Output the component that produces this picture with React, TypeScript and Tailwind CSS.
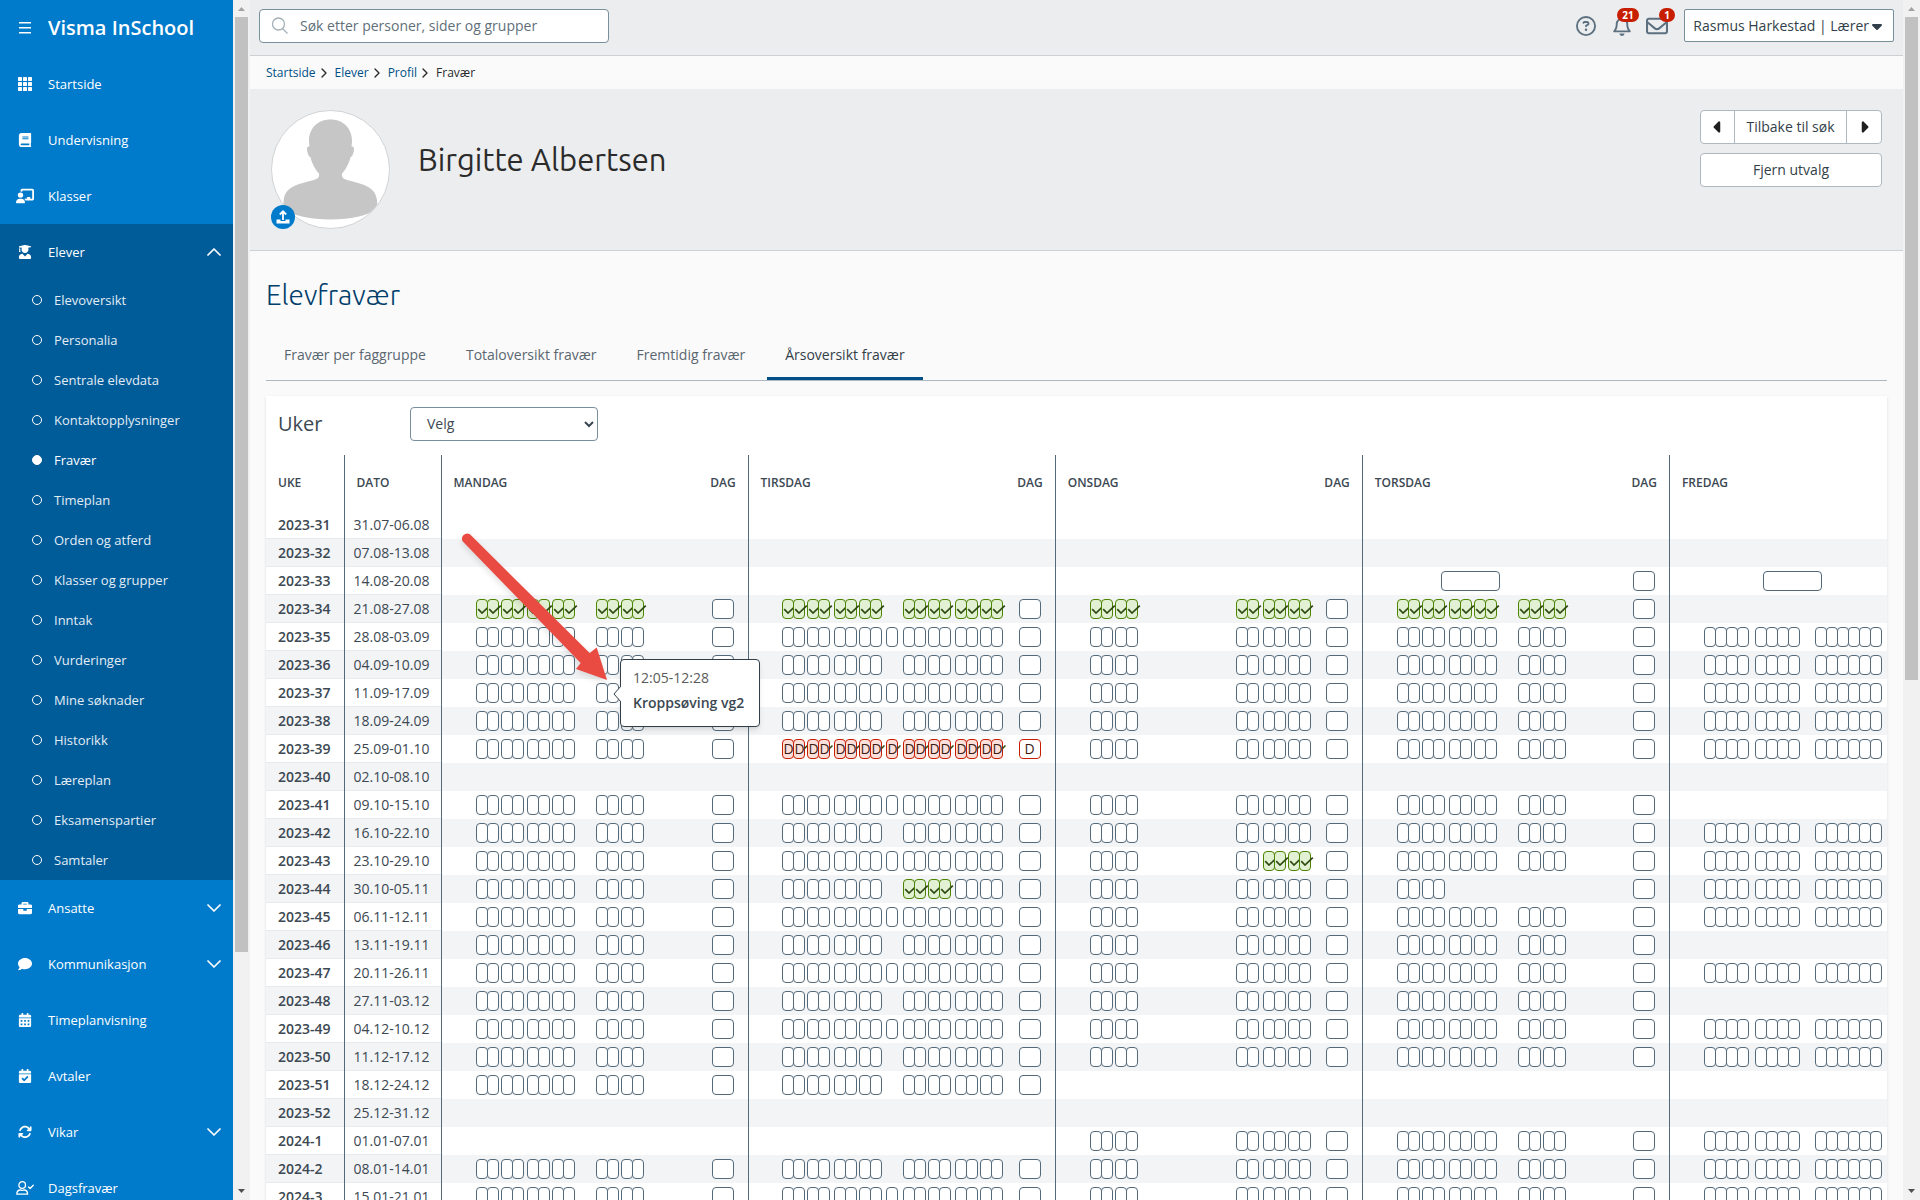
import { ReactNode } from "react";
import { FaBook, FaBriefcase, FaComment, FaCalendarAlt, FaCalendarCheck, FaUserGraduate } from "react-icons/fa";
import { FaChalkboardUser, FaArrowsRotate, FaRegCircleQuestion, FaRegBell, FaRegEnvelope, FaCaretDown, FaCaretLeft, FaCaretRight } from "react-icons/fa6";
import { ChevronDown, ChevronRight, ChevronUp } from "lucide-react";

type Status = "empty" | "present" | "absent";

interface Block {
  at: number; // start offset inside the day column
  groups: number[]; // lessons per tight group
  status?: Status;
  wide?: boolean;
}

interface Day {
  blocks: Block[];
  dag?: Status;
}

const mon = (status: Status = "empty"): Day => ({
  blocks: [
    { at: 34, groups: [2, 2], status },
    { at: 85, groups: [2, 2], status },
    { at: 154, groups: [2, 2], status },
  ],
  dag: "empty",
});

const tue = (odd: boolean, status: Status = "empty", dag: Status = "empty", third: Status = status): Day => ({
  blocks: [
    { at: 33, groups: [2, 2], status },
    { at: 85, groups: [2, 2], status },
    ...(odd ? [{ at: 137, groups: [1], status }] : []),
    { at: 154, groups: [2, 2], status: third },
    { at: 206, groups: [2, 2], status },
  ],
  dag,
});

const wed = (status: Status = "empty", last: Status = status): Day => ({
  blocks: [
    { at: 34, groups: [2, 2], status },
    { at: 180, groups: [2], status },
    { at: 207, groups: [2, 2], status: last },
  ],
  dag: "empty",
});

const thu = (status: Status = "empty"): Day => ({
  blocks: [
    { at: 34, groups: [2, 2], status },
    { at: 86, groups: [2, 2], status },
    { at: 155, groups: [2, 2], status },
  ],
  dag: "empty",
});

const fri = (): Day => ({
  blocks: [
    { at: 34, groups: [4] },
    { at: 85, groups: [4] },
    { at: 145, groups: [6] },
  ],
  dag: "empty",
});

const off: Day = { blocks: [] };

const weeks: { week: string; dates: string; days: Day[] }[] = [
  { week: "2023-31", dates: "31.07-06.08", days: [off, off, off, off, off] },
  { week: "2023-32", dates: "07.08-13.08", days: [off, off, off, off, off] },
  {
    week: "2023-33",
    dates: "14.08-20.08",
    days: [
      off,
      off,
      off,
      { blocks: [{ at: 78, groups: [1], wide: true }], dag: "empty" },
      { blocks: [{ at: 93, groups: [1], wide: true }], dag: "empty" },
    ],
  },
  { week: "2023-34", dates: "21.08-27.08", days: [mon("present"), tue(false, "present"), wed("present"), thu("present"), off] },
  { week: "2023-35", dates: "28.08-03.09", days: [mon(), tue(true), wed(), thu(), fri()] },
  { week: "2023-36", dates: "04.09-10.09", days: [mon(), tue(false), wed(), thu(), fri()] },
  { week: "2023-37", dates: "11.09-17.09", days: [mon(), tue(true), wed(), thu(), fri()] },
  { week: "2023-38", dates: "18.09-24.09", days: [mon(), tue(false), wed(), thu(), fri()] },
  { week: "2023-39", dates: "25.09-01.10", days: [mon(), tue(true, "absent", "absent"), wed(), thu(), fri()] },
  { week: "2023-40", dates: "02.10-08.10", days: [off, off, off, off, off] },
  { week: "2023-41", dates: "09.10-15.10", days: [mon(), tue(true), wed(), thu(), off] },
  { week: "2023-42", dates: "16.10-22.10", days: [mon(), tue(false), wed(), thu(), fri()] },
  { week: "2023-43", dates: "23.10-29.10", days: [mon(), tue(true), wed("empty", "present"), thu(), fri()] },
  {
    week: "2023-44",
    dates: "30.10-05.11",
    days: [mon(), tue(false, "empty", "empty", "present"), wed(), { blocks: [{ at: 34, groups: [2, 2] }], dag: "empty" }, fri()],
  },
  { week: "2023-45", dates: "06.11-12.11", days: [mon(), tue(true), wed(), thu(), fri()] },
  { week: "2023-46", dates: "13.11-19.11", days: [mon(), tue(false), wed(), thu(), off] },
  { week: "2023-47", dates: "20.11-26.11", days: [mon(), tue(true), wed(), thu(), fri()] },
  { week: "2023-48", dates: "27.11-03.12", days: [mon(), tue(false), wed(), thu(), off] },
  { week: "2023-49", dates: "04.12-10.12", days: [mon(), tue(true), wed(), thu(), fri()] },
  { week: "2023-50", dates: "11.12-17.12", days: [mon(), tue(false), wed(), thu(), fri()] },
  { week: "2023-51", dates: "18.12-24.12", days: [mon(), tue(false), off, off, off] },
  { week: "2023-52", dates: "25.12-31.12", days: [off, off, off, off, off] },
  { week: "2024-1", dates: "01.01-07.01", days: [off, off, wed(), thu(), fri()] },
  { week: "2024-2", dates: "08.01-14.01", days: [mon(), tue(false), wed(), thu(), fri()] },
  { week: "2024-3", dates: "15.01-21.01", days: [mon(), tue(true), wed(), thu(), fri()] },
];

const dayNames = ["Mandag", "Tirsdag", "Onsdag", "Torsdag", "Fredag"];

const subItems = [
  "Elevoversikt",
  "Personalia",
  "Sentrale elevdata",
  "Kontaktopplysninger",
  "Fravær",
  "Timeplan",
  "Orden og atferd",
  "Klasser og grupper",
  "Inntak",
  "Vurderinger",
  "Mine søknader",
  "Historikk",
  "Læreplan",
  "Eksamenspartier",
  "Samtaler",
];

const tabs = ["Fravær per faggruppe", "Totaloversikt fravær", "Fremtidig fravær", "Årsoversikt fravær"];

const boxColors: Record<Status, string> = {
  empty: "border-[#546a7b] bg-white",
  present: "border-[#4c8400] bg-[#e2f0d3]",
  absent: "border-[#c81e00] bg-[#fbdfda]",
};

function MenuIcon() {
  return (
    <svg viewBox="0 0 14 14" className="size-[14px]" stroke="currentColor" strokeWidth="1.4">
      <path d="M1 1.800h12M1 6.800h12M1 11.800h12" />
    </svg>
  );
}

function SearchIcon() {
  return (
    <svg viewBox="0 0 18 18" className="size-[18px] shrink-0 text-[#a3b0b8]" fill="none" stroke="currentColor" strokeWidth="1.3">
      <circle cx="7.500" cy="7" r="6" />
      <path d="M11.500 11.500 16.500 16.500" />
    </svg>
  );
}

function GridIcon() {
  return (
    <svg viewBox="0 0 14 14" className="size-[14px]" fill="currentColor">
      {[0, 5, 10].map((y) => [0, 5, 10].map((x) => <rect key={`${x}-${y}`} x={x} y={y} width="4" height="4" rx="0.4" />))}
    </svg>
  );
}

function UserCheckIcon() {
  return (
    <svg viewBox="0 0 18 14" className="w-[18px] h-[14px]" fill="none" stroke="currentColor" strokeWidth="1.3" strokeLinecap="round" strokeLinejoin="round">
      <circle cx="6.2" cy="4" r="3.3" />
      <path d="M.8 13.2c0-2.700 1.600-4.200 3.600-4.200.7 0 1 .4 1.800.4s1.100-.4 1.800-.4c2 0 3.600 1.500 3.600 4.200zM12.600 6l1.500 1.500L17.300 4.300" />
    </svg>
  );
}

function CheckMark() {
  return (
    <svg viewBox="0 0 14 10" className="w-[14px] h-[10px] shrink-0" fill="none" stroke="#2e4a12" strokeWidth="1.7">
      <path d="M1.200 5.200 5 9 12.800 1.600" />
    </svg>
  );
}

function Lesson({ status, wide }: { status: Status; wide?: boolean }) {
  return (
    <button
      aria-label="Time"
      className={`relative h-5 shrink-0 flex items-center border rounded-[4px] text-sm leading-5 font-medium text-[#3c1a14] ${wide ? "w-[59px]" : "w-3 not-first:-ml-px"} ${boxColors[status]}`}
    >
      {status === "present" && <CheckMark />}
      {status === "absent" && (
        <>
          <span className="pl-px">D</span>
          <svg viewBox="0 0 4 4" className="absolute left-[10px] top-[5px] size-1" stroke="#2e4a12" strokeWidth="1.5">
            <path d="M.5 3.500 3.500.5" />
          </svg>
        </>
      )}
    </button>
  );
}

function DayCell({ day }: { day: Day }) {
  let cursor = 0;
  return (
    <div className="flex items-center h-7 pr-[14px]">
      {day.blocks.map((block) => {
        const marginLeft = block.at - cursor;
        const width = block.wide ? 59 : block.groups.reduce((sum, n) => sum + n * 11 + 1, 0) + (block.groups.length - 1) * 2;
        cursor = block.at + width;
        return (
          <div key={block.at} className="flex gap-[2px]" style={{ marginLeft }}>
            {block.groups.map((count, g) => (
              <div key={g} className="flex">
                {Array.from({ length: count }, (_, i) => (
                  <Lesson key={i} status={block.status ?? "empty"} wide={block.wide} />
                ))}
              </div>
            ))}
          </div>
        );
      })}
      {day.dag && (
        <button
          aria-label="Dag"
          className={`ml-auto w-[22px] h-5 shrink-0 border rounded-[4px] bg-white text-sm leading-4 font-medium text-[#3c1a14] ${day.dag === "absent" ? "border-[#c81e00]" : "border-[#546a7b]"}`}
        >
          {day.dag === "absent" ? "D" : null}
        </button>
      )}
    </div>
  );
}

function NavItem({ icon, label, chevron }: { icon: ReactNode; label: string; chevron?: "up" | "down" }) {
  return (
    <a href="#" className="flex items-center h-14 pl-4 pr-[7px] text-[13px] leading-5 font-medium text-white">
      <span className="w-[18px] mr-[14px] flex justify-center text-[14px]">{icon}</span>
      <span className="grow">{label}</span>
      {chevron === "up" && <ChevronUp size={24} strokeWidth={1.75} />}
      {chevron === "down" && <ChevronDown size={24} strokeWidth={1.75} />}
    </a>
  );
}

function Sidebar() {
  return (
    <nav className="w-[233px] shrink-0 bg-[#007aca] overflow-hidden">
      <div className="flex items-center h-14 pl-[18px] text-white">
        <button aria-label="Meny">
          <MenuIcon />
        </button>
        <span className="ml-4 text-xl font-semibold">Visma InSchool</span>
      </div>
      <NavItem icon={<GridIcon />} label="Startside" />
      <NavItem icon={<FaBook />} label="Undervisning" />
      <NavItem icon={<FaChalkboardUser size={18} />} label="Klasser" />
      <div className="bg-[#005b99]">
        <NavItem icon={<FaUserGraduate />} label="Elever" chevron="up" />
        <ul>
          {subItems.map((item) => (
            <li key={item}>
              <a href="#" className={`flex items-center h-10 pl-8 text-[13px] leading-5 ${item === "Fravær" ? "text-white font-medium" : "text-[#e3edf5]"}`}>
                <span className={`size-[10px] mr-3 rounded-full border border-white ${item === "Fravær" ? "bg-white" : ""}`} />
                {item}
              </a>
            </li>
          ))}
        </ul>
      </div>
      <NavItem icon={<FaBriefcase />} label="Ansatte" chevron="down" />
      <NavItem icon={<FaComment />} label="Kommunikasjon" chevron="down" />
      <NavItem icon={<FaCalendarAlt />} label="Timeplanvisning" />
      <NavItem icon={<FaCalendarCheck />} label="Avtaler" />
      <NavItem icon={<FaArrowsRotate />} label="Vikar" chevron="down" />
      <NavItem icon={<UserCheckIcon />} label="Dagsfravær" />
    </nav>
  );
}

function ScrollBar({ thumb }: { thumb: string }) {
  return (
    <div className="w-[17px] shrink-0 flex flex-col items-center bg-[#f1f1f1]">
      <svg viewBox="0 0 17 17" className="size-[17px] shrink-0">
        <path d="M5 11h7L8.500 7z" fill="#a3a3a3" />
      </svg>
      <div className={`w-[13px] bg-[#c1c1c1] ${thumb}`} />
      <svg viewBox="0 0 17 17" className="size-[17px] shrink-0 mt-auto">
        <path d="M5 6h7L8.500 10z" fill="#505050" />
      </svg>
    </div>
  );
}

function TopBar() {
  return (
    <header className="flex items-start justify-between shrink-0 h-14 px-[9px] pt-[9px] bg-[#ecedee] border-b border-[#cdd1d4]">
      <label className="flex items-center w-[350px] h-[34px] px-[11px] bg-white border border-[#78909c] rounded-[4px]">
        <SearchIcon />
        <input type="text" placeholder="Søk etter personer, sider og grupper" className="grow ml-[11px] text-sm outline-none placeholder:text-[#5f6f7a]" />
      </label>
      <div className="flex items-center text-[#5c7080]">
        <button aria-label="Hjelp" className="mr-4">
          <FaRegCircleQuestion size={20} />
        </button>
        <button aria-label="Varsler" className="relative mr-[14px]">
          <FaRegBell size={20} />
          <span className="absolute -top-[8px] left-[5px] h-[14px] px-[5px] rounded-full bg-[#c81e00] text-white text-[10px] leading-[14px] font-bold">21</span>
        </button>
        <button aria-label="Meldinger" className="relative mr-4">
          <FaRegEnvelope size={22} />
          <span className="absolute -top-[7px] left-[13px] h-[14px] px-[5px] rounded-full bg-[#c81e00] text-white text-[10px] leading-[14px] font-bold">1</span>
        </button>
        <button className="flex items-center h-[33px] px-2 bg-white border border-[#78909c] rounded-[2px] text-sm font-medium text-[#323f49] whitespace-nowrap">
          Rasmus Harkestad | Lærer
          <FaCaretDown size={16} />
        </button>
      </div>
    </header>
  );
}

function Breadcrumbs() {
  return (
    <div className="flex items-center gap-[3px] shrink-0 h-[33px] pl-4 text-xs text-[#004f86]">
      {["Startside", "Elever", "Profil"].map((crumb) => (
        <span key={crumb} className="flex items-center">
          <a href="#">{crumb}</a>
          <ChevronRight size={16} strokeWidth={2} className="text-[#2b2b2b]" />
        </span>
      ))}
      <span className="text-[#2b2b2b]">Fravær</span>
    </div>
  );
}

function Avatar() {
  return (
    <div className="relative size-[119px] shrink-0">
      <svg viewBox="0 0 119 119" className="size-full">
        <defs>
          <clipPath id="avatar">
            <circle cx="59.500" cy="59.500" r="58.500" />
          </clipPath>
        </defs>
        <circle cx="59.500" cy="59.500" r="59" fill="#fff" stroke="#d0d3d5" />
        <g clipPath="url(#avatar)" fill="#c6c6c6">
          <path d="M59.500 9.500C47 9.500 38 18 38 31c0 2 .3 4 .5 5.500-2.500-.5-2.800 2-2.300 4.500.6 3 1.500 5.800 3.300 6.200C41 54 45 60.500 48 63.500c.6 4-1 5.500-7 7C25 74.500 14.500 77 12.700 90l-.7 9c10 6.500 28 10.500 47.500 10.500S97 106 106.500 98l-.5-8c-1.800-13-12.500-15.500-28-19.500-6-1.500-7.600-3-7-7 3-3 7-9.500 8.500-16.300 1.800-.4 2.700-3.200 3.300-6.200.5-2.500.2-5-2.300-4.500.2-1.500.5-3.500.5-5.500 0-13-9-21.500-21.500-21.500z" />
        </g>
      </svg>
      <button aria-label="Last opp bilde" className="absolute left-0 bottom-0 size-6 rounded-full bg-[#007aca] flex items-center justify-center">
        <svg viewBox="0 0 16 16" className="size-4">
          <path d="M8 11V3M4.800 5.500 8 2.300l3.200 3.200" fill="none" stroke="#fff" strokeWidth="1.800" />
          <path d="M1.500 10.500h4v1.500h5v-1.500h4v4h-13z" fill="#fff" />
        </svg>
      </button>
    </div>
  );
}

function Profile() {
  return (
    <section className="flex items-start justify-between shrink-0 h-[162px] px-[21px] pt-[21px] bg-[#ecedee] border-b border-[#cdd1d4]">
      <div className="flex">
        <Avatar />
        <h1 className="ml-7 mt-7 text-[31px] leading-[44px] font-['Ubuntu','Open_Sans',sans-serif] text-[#2b2b2b]">Birgitte Albertsen</h1>
      </div>
      <div className="w-[182px] space-y-[9px] text-sm text-[#323f49]">
        <div className="flex h-[34px] bg-white border border-[#adb8c0] rounded-[4px] divide-x divide-[#adb8c0]">
          <button aria-label="Forrige" className="w-[34px] flex items-center justify-center text-[#1f1f1f]">
            <FaCaretLeft size={18} />
          </button>
          <button className="grow">Tilbake til søk</button>
          <button aria-label="Neste" className="w-[34px] flex items-center justify-center text-[#1f1f1f]">
            <FaCaretRight size={18} />
          </button>
        </div>
        <button className="block w-full h-[34px] bg-white border border-[#adb8c0] rounded-[4px]">Fjern utvalg</button>
      </div>
    </section>
  );
}

function YearTable() {
  return (
    <table className="w-[1711px] table-fixed border-collapse">
      <colgroup>
        <col className="w-[78px]" />
        <col className="w-[97px]" />
        <col span={5} />
      </colgroup>
      <thead>
        <tr className="h-14 text-xs text-left uppercase text-[#3c4852] [&>th]:font-semibold">
          <th className="pl-3 border-r border-[#546a7b]">Uke</th>
          <th className="pl-3 border-r border-[#546a7b]">Dato</th>
          {dayNames.map((name) => (
            <th key={name} className="px-3 border-r border-[#546a7b]">
              <span className="flex justify-between">
                <span>{name}</span>
                {name !== "Fredag" && <span>Dag</span>}
              </span>
            </th>
          ))}
        </tr>
      </thead>
      <tbody>
        {weeks.map((row) => (
          <tr key={row.week} className="h-7 even:bg-[#f3f4f6] text-sm leading-5 text-[#3c4852]">
            <th className="p-0 pl-3 text-left font-semibold border-r border-[#546a7b] shadow-[inset_0_-1px_#e8eaec]">{row.week}</th>
            <td className="p-0 pl-[9px] border-r border-[#546a7b] shadow-[inset_0_-1px_#e8eaec]">{row.dates}</td>
            {row.days.map((day, i) => (
              <td key={i} className="p-0 border-r border-[#546a7b]">
                <DayCell day={day} />
              </td>
            ))}
          </tr>
        ))}
      </tbody>
    </table>
  );
}

function LessonTooltip() {
  return (
    <div role="tooltip" className="absolute left-[354px] top-[263px] w-[140px] h-[68px] pl-3 pt-[5px] bg-white border border-[#323f49] rounded-[4px] shadow-md text-sm leading-[25px] text-[#5b5b5b] whitespace-nowrap">
      <svg viewBox="0 0 8 16" className="absolute -left-[8px] top-[26px] w-2 h-4">
        <path d="M8 0 1 8l7 8" fill="#fff" stroke="#323f49" />
      </svg>
      <p>12:05-12:28</p>
      <p className="font-semibold text-[#3c4852]">Kroppsøving vg2</p>
    </div>
  );
}

function PointerArrow() {
  return (
    <svg viewBox="0 0 150 150" className="absolute left-[194px] top-[136px] size-[150px] drop-shadow-md pointer-events-none">
      <path d="M10.200 2.600 129.700 121 136.700 115.500 147 148 116 137 120.700 131 2.800 9.600A5.200 5.200 0 0 1 10.200 2.600z" fill="#e94b43" />
    </svg>
  );
}

export default function App() {
  return (
    <div className="flex h-screen overflow-hidden bg-[#fafafa] font-['Open_Sans','Noto_Sans',sans-serif]">
      <Sidebar />
      <ScrollBar thumb="h-[935px]" />
      <div className="flex flex-col grow min-w-0">
        <TopBar />
        <Breadcrumbs />
        <Profile />
        <main className="px-4">
          <h2 className="mt-6 text-[28px] leading-10 font-light font-['Ubuntu','Open_Sans',sans-serif] text-[#003e6b]">Elevfravær</h2>
          <div role="tablist" className="flex gap-1 mt-[17px] border-b border-[#adb8c0]">
            {tabs.map((tab, i) => (
              <button
                key={tab}
                role="tab"
                aria-selected={i === 3}
                className={`h-12 px-[18px] pt-px text-sm border-b-3 ${i === 3 ? "border-[#004f86] text-[#323f49]" : "border-transparent text-[#5b6770]"}`}
              >
                {tab}
              </button>
            ))}
          </div>
          <section className="relative mt-[15px] bg-white shadow-sm overflow-hidden">
            <div className="flex items-center h-[59px] pl-3 pb-1">
              <label htmlFor="weeks" className="w-[132px] text-xl text-[#3c4852]">
                Uker
              </label>
              <select id="weeks" className="w-[188px] h-[34px] px-3 bg-white border border-[#78909c] rounded-[4px] text-sm text-[#3c4852]">
                <option>Velg</option>
              </select>
            </div>
            <YearTable />
            <PointerArrow />
            <LessonTooltip />
          </section>
        </main>
      </div>
      <ScrollBar thumb="h-[663px]" />
    </div>
  );
}
